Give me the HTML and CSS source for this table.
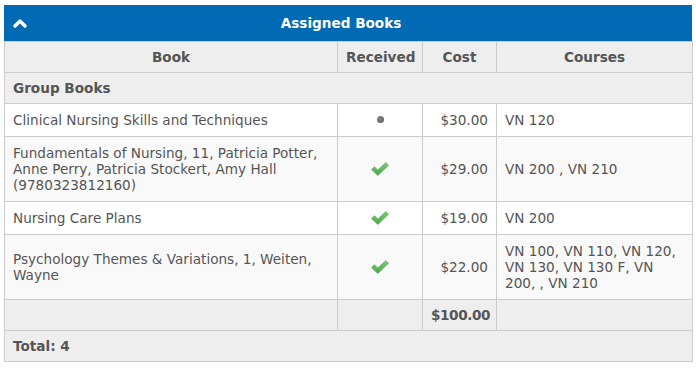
FILE: index.html
```html
<!DOCTYPE html>
<html>
<head>
<meta charset="utf-8">
<link rel="stylesheet" href="styles.css">
</head>
<body>
<div class="panel">
  <div class="panel-head">
    <svg class="chev" width="14" height="10" viewBox="0 0 14 10"><polyline points="2,8 7,3 12,8" fill="none" stroke="#fff" stroke-width="3.4" stroke-linecap="round" stroke-linejoin="round"/></svg>
    <span class="title">Assigned Books</span>
  </div>
  <table class="books">
    <colgroup>
      <col class="c-book"><col class="c-rec"><col class="c-cost"><col class="c-courses">
    </colgroup>
    <thead>
      <tr class="hdr"><th>Book</th><th>Received</th><th>Cost</th><th>Courses</th></tr>
    </thead>
    <tbody>
      <tr class="group"><td colspan="4">Group Books</td></tr>
      <tr class="odd">
        <td>Clinical Nursing Skills and Techniques</td>
        <td class="ctr"><span class="dot"></span></td>
        <td class="num">$30.00</td>
        <td>VN 120</td>
      </tr>
      <tr class="even">
        <td>Fundamentals of Nursing, 11, Patricia Potter, Anne Perry, Patricia Stockert, Amy Hall (9780323812160)</td>
        <td class="ctr"><svg class="check" width="20" height="16" viewBox="0 0 20 16"><defs><linearGradient id="g1" x1="0" y1="0" x2="0" y2="1"><stop offset="0" stop-color="#7fcf7a"/><stop offset="1" stop-color="#4aa548"/></linearGradient></defs><path d="M1.5 8.5 L4.5 5.8 L7.8 9 L15.8 1.5 L18.5 4.3 L7.8 14.5 Z" fill="url(#g1)" stroke="#4f9e4c" stroke-width="0.6" stroke-linejoin="round"/></svg></td>
        <td class="num">$29.00</td>
        <td>VN 200 , VN 210</td>
      </tr>
      <tr class="odd">
        <td>Nursing Care Plans</td>
        <td class="ctr"><svg class="check" width="20" height="16" viewBox="0 0 20 16"><defs><linearGradient id="g2" x1="0" y1="0" x2="0" y2="1"><stop offset="0" stop-color="#7fcf7a"/><stop offset="1" stop-color="#4aa548"/></linearGradient></defs><path d="M1.5 8.5 L4.5 5.8 L7.8 9 L15.8 1.5 L18.5 4.3 L7.8 14.5 Z" fill="url(#g2)" stroke="#4f9e4c" stroke-width="0.6" stroke-linejoin="round"/></svg></td>
        <td class="num">$19.00</td>
        <td>VN 200</td>
      </tr>
      <tr class="even">
        <td>Psychology Themes &amp; Variations, 1, Weiten, Wayne</td>
        <td class="ctr"><svg class="check" width="20" height="16" viewBox="0 0 20 16"><defs><linearGradient id="g3" x1="0" y1="0" x2="0" y2="1"><stop offset="0" stop-color="#7fcf7a"/><stop offset="1" stop-color="#4aa548"/></linearGradient></defs><path d="M1.5 8.5 L4.5 5.8 L7.8 9 L15.8 1.5 L18.5 4.3 L7.8 14.5 Z" fill="url(#g3)" stroke="#4f9e4c" stroke-width="0.6" stroke-linejoin="round"/></svg></td>
        <td class="num">$22.00</td>
        <td>VN 100, VN 110, VN 120, VN 130, VN 130 F, VN 200, , VN 210</td>
      </tr>
      <tr class="sum">
        <td></td><td></td><td class="num">$100.00</td><td></td>
      </tr>
    </tbody>
    <tfoot>
      <tr class="foot"><td colspan="4">Total: 4</td></tr>
    </tfoot>
  </table>
</div>
</body>
</html>
```
FILE: styles.css
```css
html, body {
  margin: 0;
  padding: 0;
  background: #fff;
}
body {
  font-family: "DejaVu Sans", Verdana, sans-serif;
  font-size: 13.6px;
  color: #555;
}
.panel {
  margin: 5px 4px 8px 4px;
  width: 688px;
}
.panel-head {
  background: #006bb4;
  height: 36px;
  display: flex;
  align-items: center;
  position: relative;
  color: #fff;
}
.chev {
  position: absolute;
  left: 9px;
  top: 13px;
}
.title {
  flex: 1;
  text-align: center;
  font-weight: bold;
  padding-right: 14px;
}
.books {
  width: 688px;
  border-collapse: collapse;
  table-layout: fixed;
}
.c-book { width: 333px; }
.c-rec { width: 85px; }
.c-cost { width: 74px; }
.c-courses { width: 196px; }
.books td, .books th {
  border: 1px solid #ccc;
  padding: 8px 8px;
  height: 16px;
  line-height: 16px;
  vertical-align: middle;
  text-align: left;
}
.books th {
  background: #eee;
  font-weight: bold;
  text-align: center;
  padding: 7px 8px;
}
.group td {
  background: #eee;
  font-weight: bold;
  padding: 7px 8px;
}
.odd td { background: #fff; }
.even td { background: #f9f9f9; }
.sum td {
  background: #eee;
  font-weight: bold;
  padding: 7px 8px;
}
.sum td.num { letter-spacing: -0.4px; }
.foot td {
  background: #eee;
  font-weight: bold;
  padding: 7px 8px;
}
.books td.num { text-align: right; }
.books td.ctr { text-align: center; }
.dot {
  display: block;
  margin: 0 auto;
  position: relative;
  top: -1px;
  width: 7px;
  height: 7px;
  border-radius: 50%;
  background: radial-gradient(circle at 40% 40%, #888, #555);
}
.check {
  display: block;
  margin: 0 auto;
}
```
